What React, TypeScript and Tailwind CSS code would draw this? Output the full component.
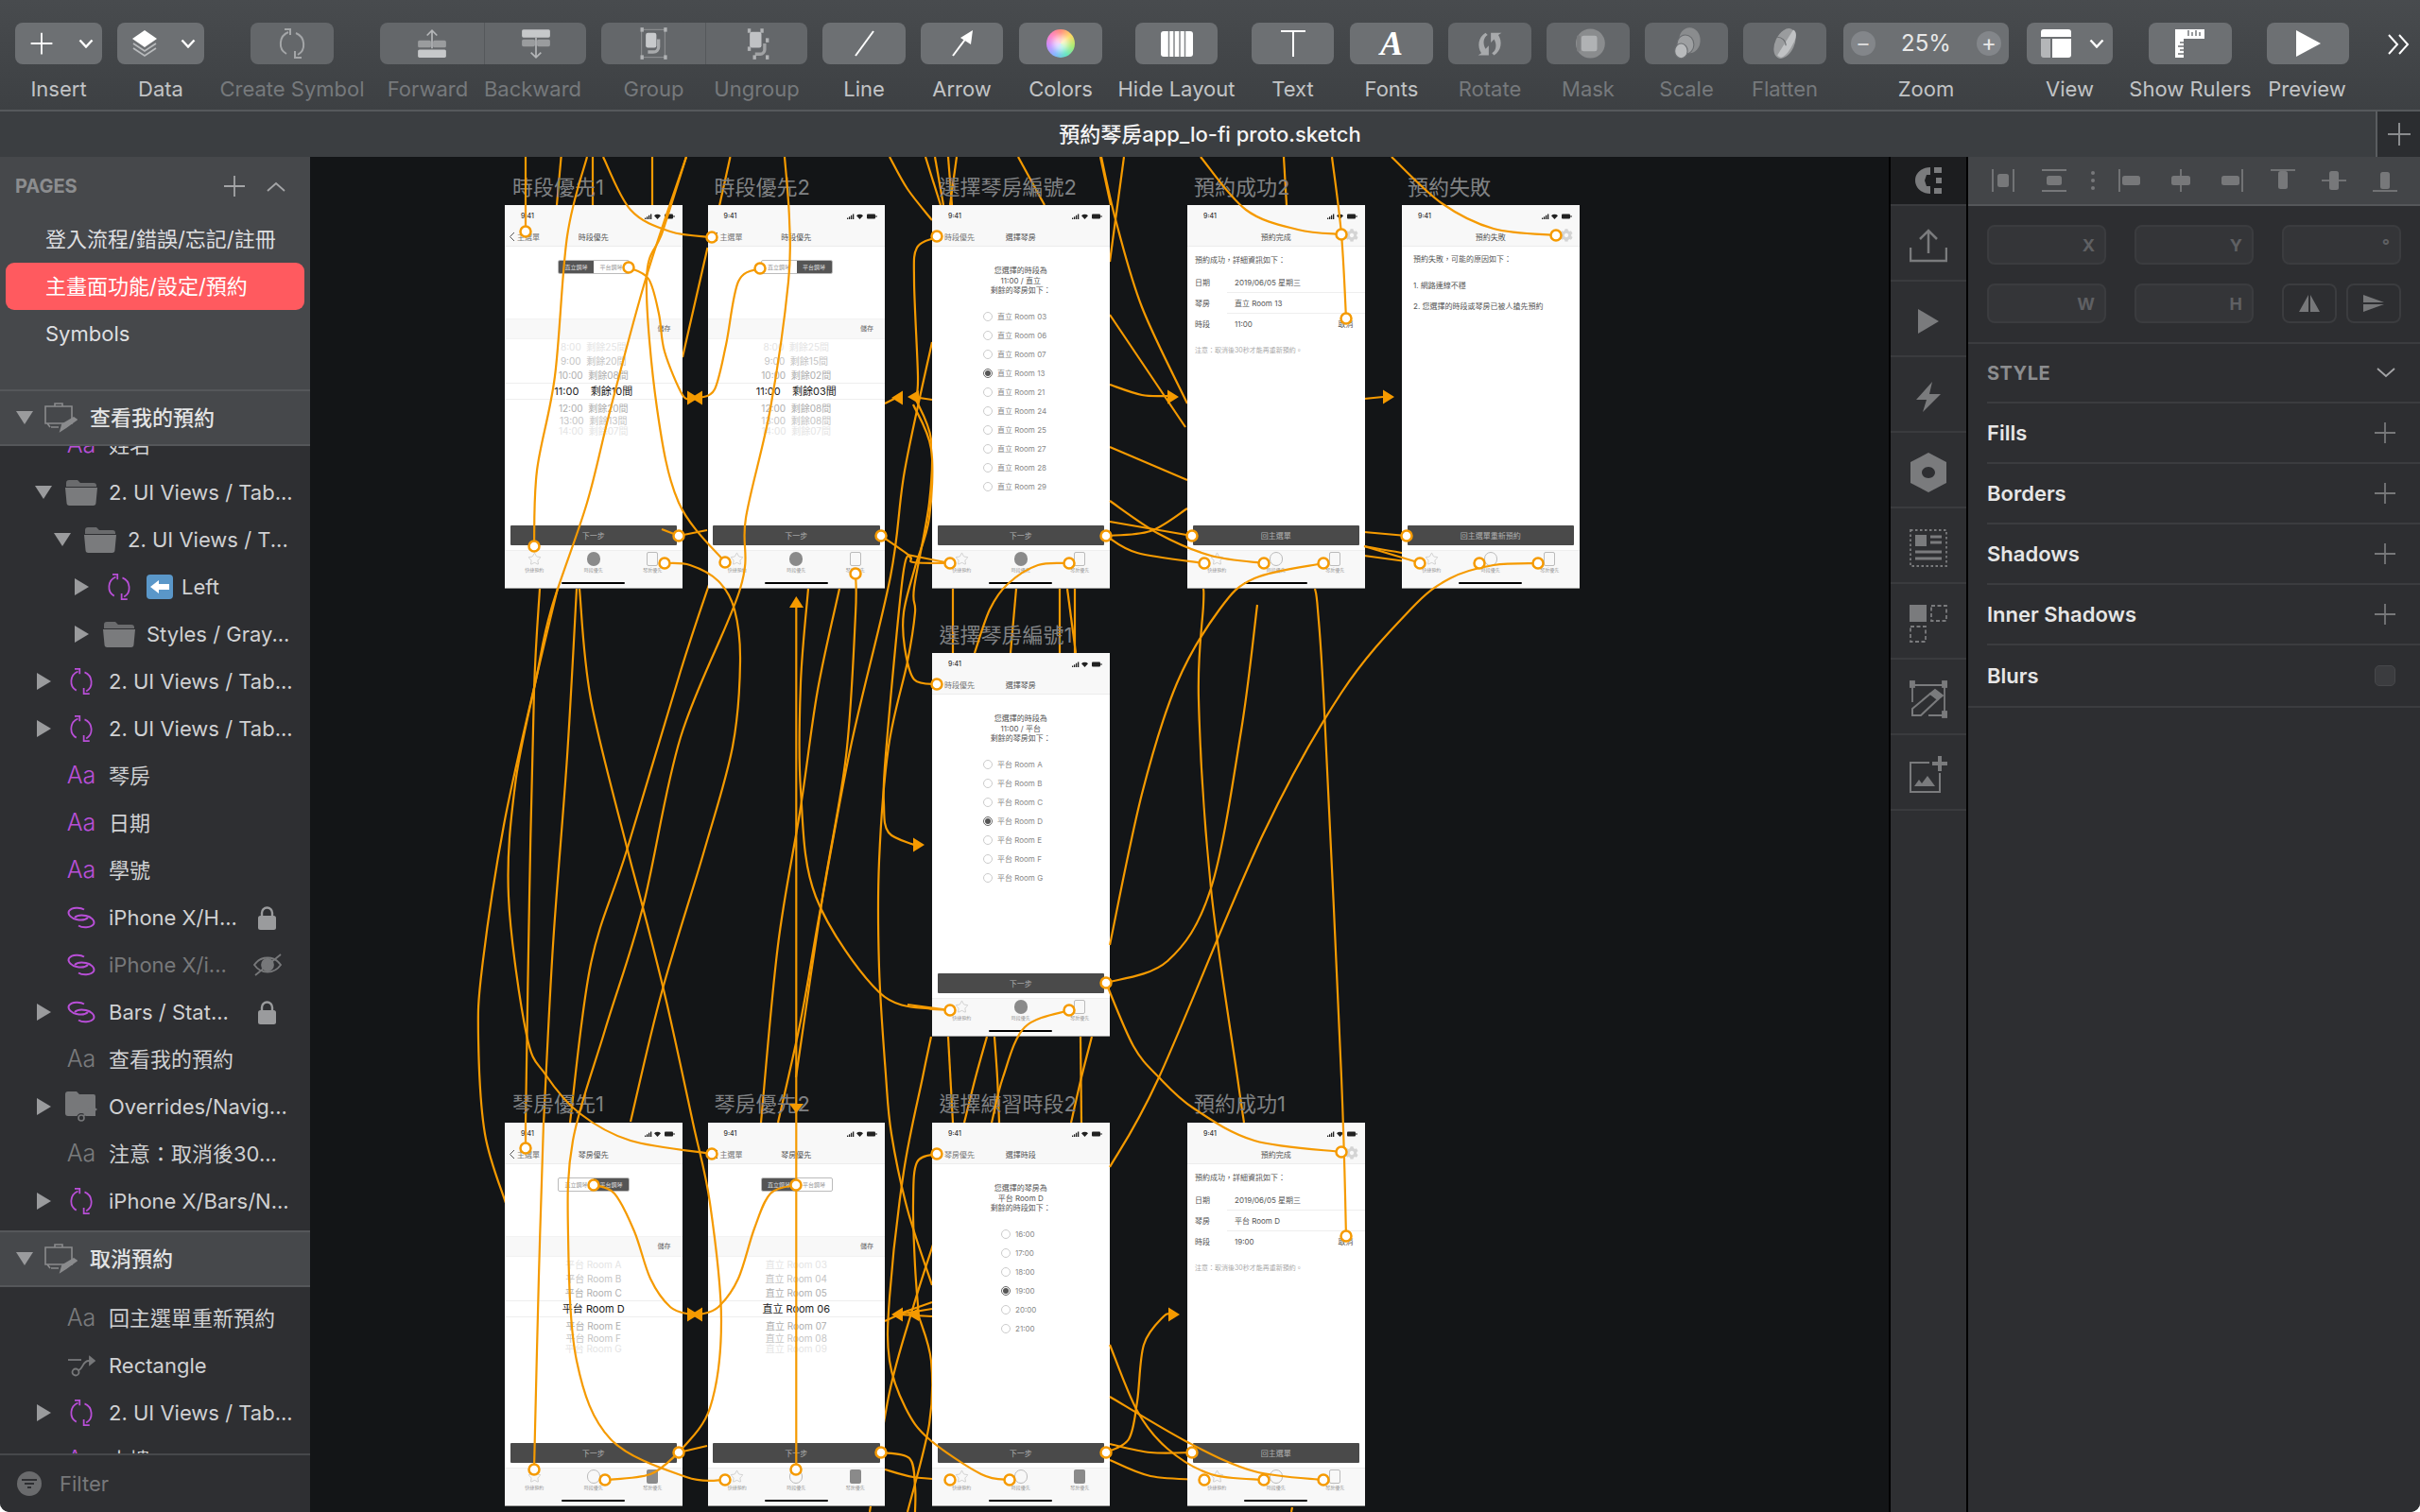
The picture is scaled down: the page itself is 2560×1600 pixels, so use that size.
import { ReactNode } from 'react';
import { Star } from 'lucide-react';
import { FaCog } from 'react-icons/fa';

type Pt = [number, number];

// catmull-rom through the traced points, good enough for the prototype links
function smooth(p: Pt[]) {
  let d = `M${p[0][0]} ${p[0][1]}`;
  for (let i = 0; i < p.length - 1; i++) {
    const a = p[Math.max(i - 1, 0)];
    const b = p[i];
    const c = p[i + 1];
    const e = p[Math.min(i + 2, p.length - 1)];
    d += ` C${b[0] + (c[0] - a[0]) / 6} ${b[1] + (c[1] - a[1]) / 6} ${c[0] - (e[0] - b[0]) / 6} ${c[1] - (e[1] - b[1]) / 6} ${c[0]} ${c[1]}`;
  }
  return d;
}

const behindLinks: Pt[][] = [
  [[593.6, 166], [589, 217]],
  [[627, 166], [627, 217]],
  [[690, 166], [690, 217]],
  [[772.5, 166], [761, 218]],
  [[748.5, 262], [722, 378]],
  [[979, 166], [995, 217]],
  [[989, 166], [998, 217]],
  [[1003, 166], [1007, 217]],
  [[1012, 166], [1005, 217]],
  [[1077, 166], [1105, 217]],
  [[941, 166], [960, 200], [986, 233]],
  [[1164, 166], [1175, 217]],
  [[1358, 166], [1361, 217]],
  [[1165, 166], [1180, 232], [1208, 325], [1256, 427]],
  [[1189, 166], [1174, 277]],
  [[1174, 333], [1254, 452]],
  [[1174, 407], [1208, 418], [1236, 419]],
  [[1174, 473], [1256, 508]],
  [[1174, 552], [1261, 567]],
  [[1170, 567], [1217, 562], [1256, 538]],
  [[1008, 623], [1008, 691]],
  [[1075, 623], [1069, 691]],
  [[1121, 623], [1121, 691]],
  [[1129, 623], [1138, 691]],
  [[1137, 623], [1137, 691]],
  [[571, 623], [565, 730], [560, 950], [556, 1190]],
  [[610, 623], [600, 800], [585, 1000], [575, 1190]],
  [[593, 610], [567, 719], [533, 873], [510, 1024], [506, 1099], [513, 1200], [535, 1273]],
  [[753, 610], [720, 710], [663, 900], [625, 1020], [603, 1188]],
  [[855, 623], [847, 723], [847, 836], [863, 949], [930, 1050], [986, 1068]],
  [[888, 623], [865, 730], [847, 854], [823, 1000], [805, 1188]],
  [[986, 362], [957, 498], [942, 610], [900, 790], [867, 967], [847, 1080], [823, 1188]],
  [[964, 590], [955, 610], [937, 798], [935, 851], [940, 881], [967, 894]],
  [[969, 423], [985, 465], [983, 532], [967, 622], [968, 648], [960, 700], [940, 790], [930, 911], [930, 1024], [937, 1137], [943, 1200], [960, 1280], [986, 1360]],
  [[1003, 1097], [1008, 1188]],
  [[1044, 1097], [1032, 1140], [1020, 1188]],
  [[1052, 1097], [1055, 1140], [1057, 1188]],
  [[1143, 1097], [1144, 1188]],
  [[1155, 1097], [1144, 1140], [1133, 1188]],
  [[1273, 623], [1273, 640], [1268, 740], [1281, 940], [1309, 1140], [1316, 1188]],
  [[1174, 1528], [1217, 1537], [1261, 1537]],
  [[1174, 1545], [1217, 1562], [1274, 1566]],
  [[1367, 1595], [1366, 1600]],
  [[987, 1317], [966, 1383], [941, 1473], [920, 1600]],
  [[986, 1378], [949, 1391]],
  [[986, 1385], [949, 1391]],
  [[986, 1393], [949, 1391]],
  [[936, 1398], [949, 1392]],
  [[936, 427], [948, 421]],
  [[986, 423], [966, 420]],
  [[972, 1393], [985, 1440], [983, 1507], [960, 1600]],
  [[932, 1537], [962, 1543], [968, 1573], [968, 1600]],
  [[936, 1555], [966, 1563], [1005, 1566]],
  [[1443, 422], [1463, 420]],
  [[1443, 563], [1488, 567]],
  [[1443, 578], [1502, 588], [1565, 596]],
  [[1443, 588], [1502, 596]],
];

const overLinks: Pt[][] = [
  [[556, 166], [556, 245]],
  [[621, 166], [600, 250], [587, 398], [568, 498], [565, 578]],
  [[726, 166], [701, 245], [684, 295], [695, 432], [718, 532], [767, 595]],
  [[726, 166], [684, 292], [646, 432], [621, 532], [583, 645], [567, 719], [545, 830], [538, 949], [557, 1095], [577, 1137], [613, 1178], [667, 1207], [753, 1221]],
  [[665, 283], [686, 295], [697, 332], [703, 372], [722, 418], [732, 421]],
  [[638, 166], [667, 222], [709, 245], [753, 251]],
  [[804, 284], [781, 298], [768, 365], [756, 412], [740, 421]],
  [[718, 567], [748, 561]],
  [[703, 596], [730, 598], [760, 615], [777, 645], [783, 700], [775, 790], [745, 900], [700, 1050], [667, 1187]],
  [[932, 567], [962, 588], [966, 595], [1005, 596]],
  [[830, 166], [835, 232], [834, 298], [815, 432], [789, 548], [783, 623], [720, 780], [680, 960], [640, 1090], [606, 1207], [601, 1307], [610, 1440], [646, 1523], [726, 1563], [767, 1566]],
  [[613, 623], [625, 740], [663, 896], [680, 960], [705, 1060], [733, 1188], [751, 1273], [763, 1397], [751, 1490], [718, 1537]],
  [[905, 607], [905, 650], [895, 800], [870, 950], [842, 1140]],
  [[842.3, 640], [842.3, 1555]],
  [[986, 1068], [1005, 1069]],
  [[991, 724], [967, 719], [957, 685], [956, 648], [968, 600], [983, 548], [985, 475], [966, 428]],
  [[991, 251], [970, 262], [967, 298], [971, 398], [969, 420]],
  [[985, 1097], [976, 1140], [956, 1240], [941, 1373], [941, 1440], [958, 1490], [983, 1523], [1038, 1560], [1068, 1566]],
  [[991, 1221], [970, 1230], [966, 1273], [968, 1340], [972, 1393]],
  [[1131, 596], [1098, 598], [1066, 618], [1047, 645], [1031, 691]],
  [[1005, 596], [960, 587]],
  [[1131, 1069], [1084, 1087], [1061, 1140], [1049, 1188]],
  [[1005, 1069], [960, 1063]],
  [[1170, 567], [1203, 585], [1274, 596]],
  [[1174, 530], [1226, 565], [1281, 588], [1337, 596]],
  [[1400, 596], [1327, 612], [1290, 645], [1245, 723], [1208, 840], [1174, 1000]],
  [[1330, 640], [1313, 773], [1281, 940], [1235, 1017], [1170, 1040]],
  [[1391, 623], [1394, 645], [1401, 753], [1419, 1140], [1424, 1308]],
  [[1627, 596], [1580, 598], [1534, 612], [1492, 645], [1419, 733], [1336, 883], [1226, 1140], [1174, 1235]],
  [[1170, 1040], [1199, 1107], [1226, 1140], [1263, 1173], [1327, 1207], [1419, 1219]],
  [[1270, 166], [1318, 222], [1373, 243], [1419, 248]],
  [[1409, 166], [1419, 248], [1424, 337]],
  [[1472, 166], [1525, 215], [1580, 242], [1646, 249]],
  [[1174, 1423], [1203, 1493], [1235, 1533], [1281, 1560], [1337, 1566]],
  [[1174, 1478], [1258, 1527], [1327, 1557], [1400, 1566]],
  [[1170, 1537], [1194, 1523], [1203, 1483], [1210, 1423], [1231, 1393], [1240, 1391]],
  [[556, 1188], [556, 1215]],
  [[575, 1188], [570, 1350], [565, 1555]],
  [[628, 1254], [650, 1263], [671, 1303], [688, 1353], [709, 1383], [730, 1391]],
  [[842, 1254], [815, 1263], [798, 1300], [781, 1353], [760, 1383], [741, 1391]],
  [[640, 1566], [688, 1560], [718, 1537]],
  [[718, 1537], [748, 1530]],
  [[1503, 596], [1443, 578]],
  [[718, 567], [700, 560]],
];

const hotspots: Pt[] = [
  [556, 245], [665, 283], [718, 567], [565, 578], [703, 596],
  [753, 251], [804, 284], [932, 567], [767, 595], [905, 607],
  [991, 250], [1170, 567], [1005, 596], [1131, 596],
  [1419, 248], [1424, 337], [1261, 567], [1274, 596], [1337, 596], [1400, 596],
  [1646, 249], [1488, 567], [1502, 596], [1565, 596], [1627, 596],
  [991, 724], [1170, 1040], [1005, 1069], [1131, 1069],
  [556, 1215], [628, 1254], [718, 1537], [565, 1555], [640, 1566],
  [753, 1221], [842, 1254], [932, 1537], [842, 1555], [767, 1566],
  [991, 1221], [1170, 1537], [1005, 1566], [1068, 1566],
  [1419, 1219], [1424, 1308], [1261, 1537], [1274, 1566], [1337, 1566], [1400, 1566],
];

const arrows: string[] = [
  '727,413.5 739,421 727,428.5',
  '743,413.5 731,421 743,428.5',
  '955,413.5 943,421 955,428.5',
  '972,413 960,420 972,427',
  '835,643 842.3,631 850,643',
  '1235,412.5 1247,420 1235,427.5',
  '1463,412.5 1475,420 1463,427.5',
  '966,886.5 978,894 966,901.5',
  '727,1383.5 739,1391 727,1398.5',
  '743,1383.5 731,1391 743,1398.5',
  '955,1383.5 943,1391 955,1398.5',
  '972,1384 960,1391 972,1398',
  '835,1168 842.3,1178 850,1168',
  '1236,1383.5 1248,1391 1236,1398.5',
];

function Links({ items }: { items: Pt[][] }) {
  return (
    <svg className="absolute inset-0 h-[1434px] w-[1672px]" viewBox="328 166 1672 1434" fill="none" stroke="#f59a00" strokeWidth="2.2">
      {items.map((p, i) => (
        <path key={i} d={smooth(p)} />
      ))}
    </svg>
  );
}

/* ---------- toolbar icons ---------- */

function Svg({ size = 32, children, className = '' }: { size?: number; children: ReactNode; className?: string }) {
  return (
    <svg width={size} height={size} viewBox="0 0 32 32" fill="none" className={className}>
      {children}
    </svg>
  );
}

function Chevron() {
  return (
    <svg width="16" height="10" viewBox="0 0 16 10" fill="none" stroke="#fff" strokeWidth="2.4">
      <path d="M1.5 1.5 8 8.5l6.5-7" />
    </svg>
  );
}

function SymbolIcon({ size = 32, color = '#a4a6a8', width = 2 }: { size?: number; color?: string; width?: number }) {
  return (
    <svg width={size} height={size} viewBox="0 0 32 32" fill="none" stroke={color} strokeWidth={width}>
      <path d="M12 4C2 8 1 22 10 27" />
      <path d="M8 1h6v6" />
      <path d="M20 5c10 4 11 18 2 23" />
      <path d="M26 31h-7v-7" />
    </svg>
  );
}

function LinkIcon() {
  return (
    <svg width="30" height="24" viewBox="0 0 30 24" fill="none" stroke="#b94fd8" strokeWidth="2">
      <path d="M18 3.500C14 1 5 1 2 5c-2 4 3 8 8 9 5 1 10 0 12-2" />
      <path d="M12 20.500c4 2.500 13 2.500 16-1.500 2-4-3-8-8-9-5-1-10 0-12 2" />
    </svg>
  );
}

const toolIcons: Record<string, ReactNode> = {
  forward: (
    <Svg size={34}>
      <path d="M16 21V3M11 8l5-5 5 5" stroke="#b4b6b8" strokeWidth="1.6" />
      <rect x="2" y="13" width="13" height="7" rx="1.5" fill="#9a9c9e" />
      <rect x="17" y="13" width="13" height="7" rx="1.500" fill="#9a9c9e" />
      <rect x="2" y="22" width="28" height="8" rx="1.500" fill="#c6c8ca" />
    </Svg>
  ),
  backward: (
    <Svg size={34}>
      <rect x="2" y="2" width="28" height="8" rx="1.500" fill="#c6c8ca" />
      <rect x="2" y="12" width="13" height="7" rx="1.500" fill="#9a9c9e" />
      <rect x="17" y="12" width="13" height="7" rx="1.500" fill="#9a9c9e" />
      <path d="M16 10v20M11 25l5 5 5-5" stroke="#b4b6b8" strokeWidth="1.600" />
    </Svg>
  ),
  group: (
    <Svg size={36}>
      <rect x="5" y="3" width="22" height="26" stroke="#8c8e90" strokeWidth="1" />
      <rect x="4" y="1" width="3" height="4" fill="#b0b2b4" />
      <rect x="26" y="1" width="3" height="4" fill="#b0b2b4" />
      <rect x="4" y="27" width="3" height="4" fill="#b0b2b4" />
      <rect x="26" y="27" width="3" height="4" fill="#b0b2b4" />
      <rect x="9" y="6" width="10" height="14" rx="2" fill="#c8cacc" />
      <path d="M21 12v7c0 3-2 5-5 5h-5" stroke="#a8aaac" strokeWidth="3" />
    </Svg>
  ),
  ungroup: (
    <Svg size={36}>
      <rect x="9" y="5" width="11" height="15" rx="2" fill="#c0c2c4" />
      <path d="M23 16v6c0 2-2 4-4 4h-5" stroke="#a0a2a4" strokeWidth="3" />
      <rect x="7" y="2" width="3" height="4" fill="#b0b2b4" />
      <rect x="19" y="2" width="3" height="4" fill="#b0b2b4" />
      <rect x="7" y="19" width="3" height="4" fill="#b0b2b4" />
      <rect x="24" y="11" width="3" height="4" fill="#b0b2b4" />
      <rect x="24" y="27" width="3" height="4" fill="#b0b2b4" />
      <rect x="12" y="27" width="3" height="4" fill="#b0b2b4" />
    </Svg>
  ),
  line: <Svg><path d="M26 3 7 29" stroke="#fff" strokeWidth="2" /></Svg>,
  arrow: (
    <Svg>
      <path d="M6 29 21 9" stroke="#fff" strokeWidth="2" />
      <path d="M27 2l-2 15-11-7z" fill="#fff" />
    </Svg>
  ),
  layout: (
    <svg width="34" height="27" viewBox="0 0 34 27">
      <rect width="34" height="27" rx="3" fill="#fff" />
      <path d="M8.500 0v27M14 0v27M20 0v27M25.500 0v27" stroke="#85888a" strokeWidth="1.500" />
    </svg>
  ),
  text: <Svg><path d="M3 3h26M16 3v27" stroke="#fff" strokeWidth="2" /></Svg>,
  rotate: (
    <Svg size={36}>
      <path d="M12 6c-7 4-8 13-4 19l-3 2h10v-9l-3 3c-3-5-2-11 2-13z" fill="#a8aaac" />
      <path d="M20 27c7-4 8-13 4-19l3-2H17v9l3-3c3 5 2 11-2 13z" fill="#a8aaac" />
    </Svg>
  ),
  mask: (
    <Svg size={38}>
      <circle cx="18" cy="16" r="13" fill="#8a8c8e" />
      <rect x="10" y="9" width="14" height="14" rx="2" fill="#b0b2b4" />
      <rect x="6" y="9" width="3" height="14" fill="#7c7e80" />
    </Svg>
  ),
  scale: (
    <Svg size={36}>
      <ellipse cx="19" cy="13" rx="10" ry="12" fill="#8a8c8e" />
      <ellipse cx="15" cy="17" rx="8" ry="9" fill="#9d9fa1" stroke="#6a6d70" />
      <ellipse cx="11" cy="23" rx="6" ry="7" fill="#b8babc" stroke="#6a6d70" />
    </Svg>
  ),
  flatten: (
    <Svg size={36}>
      <ellipse cx="16" cy="16" rx="9" ry="15" transform="rotate(25 16 16)" fill="#9a9c9e" />
      <path d="M24 3c4 2 3 8 0 13-3 6-7 12-11 13-2 0-3-1-4-2z" fill="#c0c2c4" />
      <path d="M9 10c4 0 8 3 8 8" stroke="#6a6d70" />
    </Svg>
  ),
  view: (
    <svg width="32" height="30" viewBox="0 0 32 30">
      <path d="M0 10h10v20H3a3 3 0 0 1-3-3z" fill="#b4b6b8" />
      <path d="M12 10h20v17a3 3 0 0 1-3 3H12z" fill="#fff" />
      <path d="M3 0h26a3 3 0 0 1 3 3v5H0V3a3 3 0 0 1 3-3z" fill="#fff" />
    </svg>
  ),
  rulers: (
    <svg width="32" height="30" viewBox="0 0 32 30">
      <path d="M0 0h31v10H9v20H0z" fill="#fff" />
      <path d="M14 1v6M18 3v4M22 1v6M26 3v4M5 14h4M3 18h6M5 22h4M3 26h6" stroke="#6c6f72" strokeWidth="1.400" />
    </svg>
  ),
  play: <svg width="28" height="28" viewBox="0 0 28 28"><path d="M1 0l26 14L1 28z" fill="#fff" /></svg>,
};

function Tool({ className, label, dim, bg = 'bg-[#6d7073] rounded-[8px]', labelClass = '', children }: { className: string; label: string; dim?: boolean; bg?: string; labelClass?: string; children: ReactNode }) {
  return (
    <div className={`flex flex-col items-center ${className}`}>
      <div className={`flex h-[44px] w-full items-center justify-center ${bg}`}>{children}</div>
      <span className={`mt-[12px] whitespace-nowrap text-[22px] leading-[28px] ${dim ? 'text-[#76797c]' : 'text-[#c2c4c6]'} ${labelClass}`}>{label}</span>
    </div>
  );
}

function Toolbar() {
  return (
    <div className="flex h-[118px] items-start border-b-2 border-[#56595c] bg-gradient-to-b from-[#484b4e] to-[#3d4043] pt-[24px]">
      <Tool className="ml-[16px] w-[92px]" label="Insert">
        <span className="flex w-full items-center justify-between pl-[15px] pr-[9px]">
          <Svg size={26}><path d="M16 2v28M2 16h28" stroke="#fff" strokeWidth="2.200" /></Svg>
          <Chevron />
        </span>
      </Tool>
      <Tool className="ml-[16px] w-[92px]" label="Data">
        <span className="flex w-full items-center justify-between pl-[14px] pr-[9px]">
          <svg width="30" height="30" viewBox="0 0 30 30" fill="none">
            <path d="M15 1 28 10 15 19 2 10z" fill="#fff" />
            <path d="M3 15l12 8 12-8M3 20l12 8 12-8" stroke="#b8babc" strokeWidth="1.800" />
          </svg>
          <Chevron />
        </span>
      </Tool>
      <Tool className="ml-[49px] w-[88px]" label="Create Symbol" dim bg="bg-[#64676a] rounded-[8px]">
        <SymbolIcon />
      </Tool>
      <Tool className="ml-[49px] w-[111px]" label="Forward" dim labelClass="-translate-x-[5px]" bg="bg-[#64676a] rounded-l-[8px] border-r border-[#55585b]">{toolIcons.forward}</Tool>
      <Tool className="w-[107px]" label="Backward" dim labelClass="-translate-x-[3px]" bg="bg-[#64676a] rounded-r-[8px]">{toolIcons.backward}</Tool>
      <Tool className="ml-[16px] w-[111px]" label="Group" dim bg="bg-[#64676a] rounded-l-[8px] border-r border-[#55585b]">{toolIcons.group}</Tool>
      <Tool className="w-[107px]" label="Ungroup" dim bg="bg-[#64676a] rounded-r-[8px]">{toolIcons.ungroup}</Tool>
      <Tool className="ml-[16px] w-[88px]" label="Line">{toolIcons.line}</Tool>
      <Tool className="ml-[16px] w-[87px]" label="Arrow">{toolIcons.arrow}</Tool>
      <Tool className="ml-[17px] w-[88px]" label="Colors">
        <span className="relative h-[30px] w-[30px] rounded-full bg-[conic-gradient(#ff8a7a,#ffd860,#a6ec6e,#5fe3c0,#7fb5ff,#c58bff,#ff7fc4,#ff8a7a)]">
          <span className="absolute inset-[6px] rounded-full bg-[#ffffffb0] blur-[3px]" />
        </span>
      </Tool>
      <Tool className="ml-[35px] w-[87px]" label="Hide Layout">{toolIcons.layout}</Tool>
      <Tool className="ml-[36px] w-[87px]" label="Text">{toolIcons.text}</Tool>
      <Tool className="ml-[17px] w-[88px]" label="Fonts">
        <span className="[font-family:'Liberation_Serif',serif] text-[36px] font-bold italic leading-none text-white">A</span>
      </Tool>
      <Tool className="ml-[16px] w-[88px]" label="Rotate" dim bg="bg-[#64676a] rounded-[8px]">{toolIcons.rotate}</Tool>
      <Tool className="ml-[16px] w-[88px]" label="Mask" dim bg="bg-[#64676a] rounded-[8px]">{toolIcons.mask}</Tool>
      <Tool className="ml-[16px] w-[88px]" label="Scale" dim bg="bg-[#64676a] rounded-[8px]">{toolIcons.scale}</Tool>
      <Tool className="ml-[16px] w-[88px]" label="Flatten" dim bg="bg-[#64676a] rounded-[8px]">{toolIcons.flatten}</Tool>
      <Tool className="ml-[18px] w-[175px]" label="Zoom">
        <span className="flex w-full items-center justify-between px-[8px]">
          <span className="flex h-[26px] w-[26px] items-center justify-center rounded-full bg-[#83868a] text-[24px] leading-none text-[#d8d8d8]">−</span>
          <span className="text-[24px] text-[#e8e8e8]">25%</span>
          <span className="flex h-[26px] w-[26px] items-center justify-center rounded-full bg-[#83868a] text-[24px] leading-none text-[#e8e8e8]">+</span>
        </span>
      </Tool>
      <Tool className="ml-[19px] w-[91px]" label="View">
        <span className="flex w-full items-center justify-between pl-[15px] pr-[9px]">
          {toolIcons.view}
          <Chevron />
        </span>
      </Tool>
      <Tool className="ml-[38px] w-[88px]" label="Show Rulers">{toolIcons.rulers}</Tool>
      <Tool className="ml-[37px] w-[87px]" label="Preview" labelClass="-translate-x-[1px]">{toolIcons.play}</Tool>
      <svg className="ml-[40px] mt-[11px]" width="24" height="24" viewBox="0 0 24 24" fill="none" stroke="#fff" strokeWidth="2">
        <path d="M2 2l9 10-9 10M13 2l9 10-9 10" />
      </svg>
    </div>
  );
}

function TitleBar() {
  return (
    <div className="flex h-[48px] bg-[#3b3e41]">
      <div className="flex flex-1 items-center justify-center pl-[47px] text-[22px] font-medium text-[#f4f4f4]">預約琴房app_lo-fi proto.sketch</div>
      <div className="flex w-[47px] items-center justify-center border-l-2 border-[#5a5d60] bg-[#2b2d30]">
        <svg width="24" height="24" viewBox="0 0 24 24" stroke="#8a8c8e" strokeWidth="2"><path d="M12 0v24M0 12h24" /></svg>
      </div>
    </div>
  );
}

/* ---------- layer list ---------- */

function Disclosure({ open }: { open: boolean }) {
  return open ? (
    <svg width="18" height="14" viewBox="0 0 18 14"><path d="M0 0h18L9 14z" fill="#9a9b9d" /></svg>
  ) : (
    <svg width="15" height="18" viewBox="0 0 15 18"><path d="M0 0l15 9-15 9z" fill="#9a9b9d" /></svg>
  );
}

function FolderIcon({ w = 34 }: { w?: number }) {
  return (
    <svg width={w} height="28" viewBox="0 0 34 28">
      <path d="M1 4a3 3 0 0 1 3-3h9l3 3h14a3 3 0 0 1 3 3v1H1z" fill="#6a6b6d" />
      <path d="M0 9h34l-1.500 16a3 3 0 0 1-3 3H4.500a3 3 0 0 1-3-3z" fill="#7a7b7d" />
    </svg>
  );
}

function HotspotFolder() {
  return (
    <svg width="34" height="32" viewBox="0 0 34 32">
      <path d="M0 3a3 3 0 0 1 3-3h9l3 3h15a2 2 0 0 1 2 2v21H3a3 3 0 0 1-3-3z" fill="#77787a" />
      <circle cx="17" cy="28" r="3" fill="none" stroke="#2e2f32" strokeWidth="4" />
      <circle cx="17" cy="28" r="3" fill="none" stroke="#77787a" strokeWidth="1.600" />
      <path d="M19 26c3-1 3-7 8-7h3" stroke="#77787a" strokeWidth="1.600" fill="none" />
      <path d="M29 15l5 4-5 4z" fill="#77787a" />
    </svg>
  );
}

function HotspotIcon() {
  return (
    <svg width="30" height="24" viewBox="0 0 30 24" fill="none" stroke="#77787a" strokeWidth="1.800">
      <path d="M1 6h14" />
      <circle cx="9" cy="19" r="3.500" />
      <path d="M12 17c5-1 4-10 11-10h2" />
      <path d="M24 3l5 4-5 4z" fill="#77787a" />
    </svg>
  );
}

function Lock() {
  return (
    <svg width="19" height="26" viewBox="0 0 19 26" className="ml-auto mr-[36px]">
      <path d="M4 12V8a5.500 5.500 0 0 1 11 0v4" fill="none" stroke="#9a9b9d" strokeWidth="2.400" />
      <rect y="11" width="19" height="15" rx="2.500" fill="#9a9b9d" />
    </svg>
  );
}

function EyeOff() {
  return (
    <svg width="30" height="24" viewBox="0 0 30 24" fill="none" stroke="#77787a" strokeWidth="1.800" className="ml-auto mr-[30px]">
      <path d="M1 12c7-10 21-10 28 0-7 10-21 10-28 0z" />
      <circle cx="15" cy="12" r="6" fill="#77787a" />
      <path d="M2 23 29 1" />
    </svg>
  );
}

function LeftEmoji() {
  return (
    <svg width="28" height="26" viewBox="0 0 28 26" className="mr-[9px]">
      <rect width="28" height="26" rx="4" fill="#5a97c9" />
      <path d="M4 13l9-7v4h11v6H13v4z" fill="#fff" />
    </svg>
  );
}

type Row = {
  depth?: 1 | 2 | 3;
  open?: boolean;
  icon: ReactNode;
  text: string;
  muted?: boolean;
  lead?: ReactNode;
  end?: ReactNode;
};

const aaPurple = <span className="text-[25px] font-light text-[#b94fd8]">Aa</span>;
const aaGray = <span className="text-[25px] font-light text-[#7a7b7d]">Aa</span>;
const symbol = <SymbolIcon size={28} color="#b94fd8" />;
const link = <LinkIcon />;

const layerRows: Row[] = [
  { icon: aaPurple, text: '姓名' },
  { open: true, icon: <FolderIcon />, text: '2. UI Views / Tab...' },
  { depth: 2, open: true, icon: <FolderIcon />, text: '2. UI Views / T...' },
  { depth: 3, open: false, icon: symbol, lead: <LeftEmoji />, text: 'Left' },
  { depth: 3, open: false, icon: <FolderIcon />, text: 'Styles / Gray...' },
  { open: false, icon: symbol, text: '2. UI Views / Tab...' },
  { open: false, icon: symbol, text: '2. UI Views / Tab...' },
  { icon: aaPurple, text: '琴房' },
  { icon: aaPurple, text: '日期' },
  { icon: aaPurple, text: '學號' },
  { icon: link, text: 'iPhone X/H...', end: <Lock /> },
  { icon: link, text: 'iPhone X/i...', muted: true, end: <EyeOff /> },
  { open: false, icon: link, text: 'Bars / Stat...', end: <Lock /> },
  { icon: aaGray, text: '查看我的預約' },
  { open: false, icon: <HotspotFolder />, text: 'Overrides/Navig...' },
  { icon: aaGray, text: '注意：取消後30...' },
  { open: false, icon: symbol, text: 'iPhone X/Bars/N...' },
];

const cancelRows: Row[] = [
  { icon: aaGray, text: '回主選單重新預約' },
  { icon: <HotspotIcon />, text: 'Rectangle' },
  { open: false, icon: symbol, text: '2. UI Views / Tab...' },
  { icon: aaPurple, text: '大樓' },
];

function LayerRow({ depth = 1, open, icon, text, muted, lead, end }: Row) {
  const pad = depth === 1 ? 'pl-[37px]' : depth === 2 ? 'pl-[57px]' : 'pl-[77px]';
  return (
    <div className={`flex h-[50px] shrink-0 items-center ${pad}`}>
      <span className="flex w-[18px] justify-center">{open !== undefined && <Disclosure open={open} />}</span>
      <span className="ml-[13px] flex w-[36px] justify-center">{icon}</span>
      <span className={`ml-[11px] flex items-center whitespace-nowrap text-[22px] ${muted ? 'text-[#77787a]' : 'text-[#d0d1d3]'}`}>
        {lead}
        {text}
      </span>
      {end}
    </div>
  );
}

function GroupHeader({ title }: { title: string }) {
  return (
    <div className="relative z-10 flex h-[60px] shrink-0 items-center border-y-2 border-[#55575a] bg-[#46484b] pl-[17px]">
      <Disclosure open />
      <svg className="ml-[11px]" width="36" height="32" viewBox="0 0 36 32" fill="none" stroke="#8a8b8d" strokeWidth="1.600">
        <path d="M2 4h28v18H2zM12 4V1h8v3M8 26h8M4 22l3 4" />
        <path d="M35 18 24 26l-6 4 2-7 12-7z" fill="#8a8b8d" />
      </svg>
      <span className="ml-[13px] text-[22px] font-medium text-[#e2e3e4]">{title}</span>
    </div>
  );
}

function Sidebar() {
  return (
    <aside className="flex w-[328px] shrink-0 flex-col overflow-hidden bg-[#2e2f32]">
      <div className="h-[246px] shrink-0 bg-[#46484b]">
        <div className="flex h-[62px] items-center pl-[16px]">
          <span className="text-[20px] font-bold text-[#8c8d8f]">PAGES</span>
          <svg className="ml-[155px]" width="22" height="22" viewBox="0 0 22 22" stroke="#a4a5a7" strokeWidth="1.800"><path d="M11 0v22M0 11h22" /></svg>
          <svg className="ml-[23px]" width="20" height="11" viewBox="0 0 20 11" fill="none" stroke="#a4a5a7" strokeWidth="1.800"><path d="M1 10l9-8 9 8" /></svg>
        </div>
        <div className="flex h-[50px] items-center pl-[48px] text-[22px] text-[#dedfe0]">登入流程/錯誤/忘記/註冊</div>
        <div className="mx-[6px] flex h-[50px] items-center rounded-[9px] bg-[#ff5a5f] pl-[42px] text-[22px] text-white">主畫面功能/設定/預約</div>
        <div className="flex h-[50px] items-center pl-[48px] text-[22px] text-[#dedfe0]">Symbols</div>
      </div>
      <GroupHeader title="查看我的預約" />
      <div className="flex h-[830px] shrink-0 flex-col overflow-hidden">
        <div className="-mt-[26px]">
          {layerRows.map((r, i) => (
            <LayerRow key={i} {...r} />
          ))}
        </div>
      </div>
      <GroupHeader title="取消預約" />
      <div className="h-[176px] shrink-0 overflow-hidden pt-[8px]">
        {cancelRows.map((r, i) => (
          <LayerRow key={i} {...r} />
        ))}
      </div>
      <div className="flex flex-1 items-center border-t-2 border-[#46484b] pl-[18px]">
        <svg width="26" height="26" viewBox="0 0 26 26" stroke="#2e2f32" strokeWidth="2">
          <circle cx="13" cy="13" r="13" fill="#6a6b6d" stroke="none" />
          <path d="M5 9h16M8 13h10M11 17h4" />
        </svg>
        <span className="ml-[19px] text-[22px] text-[#77787a]">Filter</span>
      </div>
    </aside>
  );
}

/* ---------- artboards ---------- */

function StatusBar() {
  return (
    <div className="flex h-[24px] items-center justify-between pl-[17px] pr-[8px]">
      <span className="text-[7px] font-medium text-[#333]">9:41</span>
      <svg width="32" height="6" viewBox="0 0 32 6" fill="#222">
        <path d="M0 4.500h1.300V6H0zM2 3.200h1.300V6H2zM4 1.800h1.300V6H4zM6 .5h1.300V6H6z" />
        <path d="M10 2.200a5 5 0 0 1 7 0l-3.500 3.800z" />
        <rect x="21" y=".5" width="9" height="5" rx="1" />
        <rect x="30.500" y="2" width="1" height="2" />
      </svg>
    </div>
  );
}

function Phone({ className, back, title, gear, footer, tab, children }: { className: string; back?: string; title: string; gear?: boolean; footer: string; tab?: 'circle' | 'square'; children: ReactNode }) {
  return (
    <div className={`absolute flex h-[406px] w-[187.5px] flex-col overflow-hidden border-b border-[#999] bg-white [font-family:Inter,'Noto_Sans_CJK_TC',sans-serif] ${className}`}>
      <div className="h-[44px] shrink-0 border-b border-[#ececec] bg-[#f8f8f8]">
        <StatusBar />
        <div className="relative flex h-[19px] items-center justify-center text-[8px] text-[#555]">
          {back && (
            <span className="absolute left-[4px] flex items-center text-[#777]">
              <svg width="7" height="11" viewBox="0 0 7 11" fill="none" stroke="#555" strokeWidth="1"><path d="M6 1 1.500 5.500 6 10" /></svg>
              <span className="ml-[2px]">{back}</span>
            </span>
          )}
          {title}
          {gear && <FaCog className="absolute right-[7px] top-[1px] text-[14px] text-[#d4d4d4]" />}
        </div>
      </div>
      <div className="flex-1 overflow-hidden">{children}</div>
      <div className="mx-[5.5px] flex h-[21px] shrink-0 items-center justify-center rounded-[1px] bg-[#4a4a4a] text-[8px] text-[#b0b0b0]">{footer}</div>
      <div className="mt-[5px] flex h-[40px] shrink-0 flex-col border-t border-[#eeeeee] bg-[#f8f8f8]">
        <div className="grid grid-cols-3 pt-[1px]">
          <div className="flex flex-col items-center">
            <Star size={15} strokeWidth={0.8} className="text-[#aaa]" />
            <span className="mt-[2px] text-[5px] leading-none text-[#999]">快捷預約</span>
          </div>
          <div className="flex flex-col items-center">
            <span className={`h-[15px] w-[14px] rounded-full ${tab === 'circle' ? 'bg-[#8a8a8a]' : 'border border-[#bbb]'}`} />
            <span className="mt-[2px] text-[5px] leading-none text-[#999]">時段優先</span>
          </div>
          <div className="flex flex-col items-center">
            <span className={`h-[15px] w-[12px] rounded-[2px] ${tab === 'square' ? 'bg-[#8a8a8a]' : 'border border-[#bbb]'}`} />
            <span className="mt-[2px] text-[5px] leading-none text-[#999]">琴房優先</span>
          </div>
        </div>
        <div className="mx-auto mb-[4px] mt-auto h-[2px] w-[67px] rounded-full bg-black" />
      </div>
    </div>
  );
}

const pickerRowStyles = [
  'h-[16px] text-[#e4e4e4]',
  'h-[15px] text-[#c4c4c4]',
  'h-[15px] text-[#adadad]',
  'h-[18px] border-y border-[#eeeeee] text-[11px] text-[#222]',
  'h-[18px] text-[#adadad]',
  'h-[9px] text-[#c4c4c4]',
  'h-[13px] text-[#e4e4e4]',
];

function PickerBody({ active, rows }: { active: 0 | 1; rows: string[] }) {
  return (
    <div className="flex h-full flex-col">
      <div className="mt-[14px] ml-[56px] flex h-[15px] w-[76px] overflow-hidden rounded-[2px] border border-[#bbb] text-[6px]">
        <span className={`flex w-1/2 items-center justify-center ${active === 0 ? 'bg-[#555] text-[#ddd]' : 'text-[#999]'}`}>直立鋼琴</span>
        <span className={`flex w-1/2 items-center justify-center ${active === 1 ? 'bg-[#555] text-[#ddd]' : 'text-[#999]'}`}>平台鋼琴</span>
      </div>
      <div className="mt-[47px] flex h-[22px] shrink-0 items-center justify-end border-y border-[#f2f2f2] bg-[#f8f8f8] pr-[12px] text-[7px] text-[#666]">儲存</div>
      <div className="flex h-[104px] shrink-0 flex-col overflow-hidden text-[10px]">
        {rows.map((r, i) => (
          <div key={i} className={`flex shrink-0 items-center justify-center whitespace-pre ${pickerRowStyles[i]}`}>
            {r}
          </div>
        ))}
      </div>
    </div>
  );
}

function RadioBody({ intro, items, selected, pad }: { intro: string[]; items: string[]; selected: number; pad: string }) {
  return (
    <div className="pt-[20px]">
      {intro.map((l) => (
        <p key={l} className="text-center text-[8px] leading-[10.500px] text-[#555]">
          {l}
        </p>
      ))}
      <div className={`mt-[12px] ${pad}`}>
        {items.map((t, i) => (
          <div key={t} className="flex h-[20px] items-center text-[8px] text-[#888]">
            <span className={`mr-[5px] flex h-[10px] w-[10px] items-center justify-center rounded-full border ${i === selected ? 'border-[#666]' : 'border-[#ccc]'}`}>
              {i === selected && <span className="h-[6px] w-[6px] rounded-full bg-[#555]" />}
            </span>
            {t}
          </div>
        ))}
      </div>
    </div>
  );
}

function SuccessBody({ room, time }: { room: string; time: string }) {
  const rows = [
    ['日期', '2019/06/05 星期三'],
    ['琴房', room],
    ['時段', time],
  ];
  return (
    <div className="text-[8px] text-[#555]">
      <p className="mt-[8px] flex h-[12px] items-center pl-[8px]">預約成功，詳細資訊如下：</p>
      <div className="mt-[7px]">
        {rows.map(([a, b], i) => (
          <div key={a} className="flex h-[22px] items-center pl-[8px]">
            <span className="w-[34px] shrink-0">{a}</span>
            <span className={`flex h-full flex-1 items-center justify-between pl-[8px] pr-[12px] ${i < 2 ? 'border-b border-[#eeeeee]' : ''}`}>
              {b}
              {i === 2 && <span>取消</span>}
            </span>
          </div>
        ))}
      </div>
      <p className="mt-[12px] pl-[8px] text-[7px] text-[#aaa]">注意：取消後30秒才能再重新預約。</p>
    </div>
  );
}

function FailBody() {
  return (
    <div className="pl-[12px] pt-[7px] text-[8px] text-[#555]">
      <p className="h-[12px]">預約失敗，可能的原因如下：</p>
      <p className="mt-[16px] h-[12px]">1. 網路連線不穩</p>
      <p className="mt-[10px] h-[12px]">2. 您選擇的時段或琴房已被人搶先預約</p>
    </div>
  );
}

const roomsA = ['直立 Room 03', '直立 Room 06', '直立 Room 07', '直立 Room 13', '直立 Room 21', '直立 Room 24', '直立 Room 25', '直立 Room 27', '直立 Room 28', '直立 Room 29'];
const roomsB = ['平台 Room A', '平台 Room B', '平台 Room C', '平台 Room D', '平台 Room E', '平台 Room F', '平台 Room G'];
const times = ['16:00', '17:00', '18:00', '19:00', '20:00', '21:00'];

function CanvasLabel({ className, children }: { className: string; children: string }) {
  return <span className={`absolute whitespace-nowrap text-[22px] leading-[26px] text-[#808284] ${className}`}>{children}</span>;
}

function Canvas() {
  return (
    <main className="relative w-[1672px] shrink-0 overflow-hidden border-r-2 border-black bg-[#131517]">
      <Links items={behindLinks} />

      <CanvasLabel className="left-[214px] top-[19px]">時段優先1</CanvasLabel>
      <CanvasLabel className="left-[427.500px] top-[19px]">時段優先2</CanvasLabel>
      <CanvasLabel className="left-[665.500px] top-[19px]">選擇琴房編號2</CanvasLabel>
      <CanvasLabel className="left-[935px] top-[19px]">預約成功2</CanvasLabel>
      <CanvasLabel className="left-[1161px] top-[19px]">預約失敗</CanvasLabel>
      <CanvasLabel className="left-[665.500px] top-[493px]">選擇琴房編號1</CanvasLabel>
      <CanvasLabel className="left-[214px] top-[989px]">琴房優先1</CanvasLabel>
      <CanvasLabel className="left-[427.500px] top-[989px]">琴房優先2</CanvasLabel>
      <CanvasLabel className="left-[665.500px] top-[989px]">選擇練習時段2</CanvasLabel>
      <CanvasLabel className="left-[935px] top-[989px]">預約成功1</CanvasLabel>

      <Phone className="left-[206px] top-[51px]" back="主選單" title="時段優先" footer="下一步" tab="circle">
        <PickerBody active={0} rows={['8:00  剩餘25間', '9:00  剩餘20間', '10:00  剩餘08間', '11:00    剩餘10間', '12:00  剩餘20間', '13:00  剩餘13間', '14:00  剩餘07間']} />
      </Phone>
      <Phone className="left-[420.500px] top-[51px]" back="主選單" title="時段優先" footer="下一步" tab="circle">
        <PickerBody active={1} rows={['8:00  剩餘25間', '9:00  剩餘15間', '10:00  剩餘02間', '11:00    剩餘03間', '12:00  剩餘08間', '13:00  剩餘08間', '14:00  剩餘07間']} />
      </Phone>
      <Phone className="left-[658px] top-[51px]" back="時段優先" title="選擇琴房" footer="下一步" tab="circle">
        <RadioBody intro={['您選擇的時段為', '11:00 / 直立', '剩餘的琴房如下：']} items={roomsA} selected={3} pad="pl-[54px]" />
      </Phone>
      <Phone className="left-[928px] top-[51px]" title="預約完成" gear footer="回主選單">
        <SuccessBody room="直立 Room 13" time="11:00" />
      </Phone>
      <Phone className="left-[1155px] top-[51px]" title="預約失敗" gear footer="回主選單重新預約">
        <FailBody />
      </Phone>

      <Phone className="left-[658px] top-[525px]" back="時段優先" title="選擇琴房" footer="下一步" tab="circle">
        <RadioBody intro={['您選擇的時段為', '11:00 / 平台', '剩餘的琴房如下：']} items={roomsB} selected={3} pad="pl-[54px]" />
      </Phone>

      <Phone className="left-[206px] top-[1022px]" back="主選單" title="琴房優先" footer="下一步" tab="square">
        <PickerBody active={1} rows={['平台 Room A', '平台 Room B', '平台 Room C', '平台 Room D', '平台 Room E', '平台 Room F', '平台 Room G']} />
      </Phone>
      <Phone className="left-[420.500px] top-[1022px]" back="主選單" title="琴房優先" footer="下一步" tab="square">
        <PickerBody active={0} rows={['直立 Room 03', '直立 Room 04', '直立 Room 05', '直立 Room 06', '直立 Room 07', '直立 Room 08', '直立 Room 09']} />
      </Phone>
      <Phone className="left-[658px] top-[1022px]" back="琴房優先" title="選擇時段" footer="下一步" tab="square">
        <RadioBody intro={['您選擇的琴房為', '平台 Room D', '剩餘的時段如下：']} items={times} selected={3} pad="pl-[73px]" />
      </Phone>
      <Phone className="left-[928px] top-[1022px]" title="預約完成" gear footer="回主選單">
        <SuccessBody room="平台 Room D" time="19:00" />
      </Phone>

      <Links items={overLinks} />
      <svg className="absolute inset-0 h-[1434px] w-[1672px]" viewBox="328 166 1672 1434">
        {arrows.map((a) => (
          <polygon key={a} points={a} fill="#f59a00" />
        ))}
        {hotspots.map(([x, y], i) => (
          <circle key={i} cx={x} cy={y} r="5.500" fill="#fff" stroke="#f59a00" strokeWidth="2.500" />
        ))}
      </svg>
    </main>
  );
}

/* ---------- right side ---------- */

const railIcons: ReactNode[] = [
  <svg width="40" height="36" viewBox="0 0 40 36" fill="none" stroke="#7a7b7d" strokeWidth="2.500">
    <path d="M1 20v14h38V20M20 26V3M11 11l9-9 9 9" />
  </svg>,
  <svg width="24" height="28" viewBox="0 0 24 28"><path d="M1 1l22 13L1 27z" fill="#7a7b7d" /></svg>,
  <svg width="26" height="32" viewBox="0 0 26 32"><path d="M17 0 0 19h11L7 32l19-19H14z" fill="#7a7b7d" /></svg>,
  <svg width="38" height="42" viewBox="0 0 38 42" fillRule="evenodd"><path d="M19 0l19 10v22L19 42 0 32V10zM19 15c-4 0-7 3-7 6s3 6 7 6 7-3 7-6-3-6-7-6z" fill="#7a7b7d" /></svg>,
  <svg width="40" height="40" viewBox="0 0 40 40" fill="none">
    <rect x="1" y="1" width="38" height="38" stroke="#7a7b7d" strokeWidth="1.800" strokeDasharray="2.500 2.500" />
    <rect x="6" y="6" width="12" height="12" fill="#7a7b7d" />
    <path d="M22 8h12M22 14h12M6 24h28M6 31h28" stroke="#7a7b7d" strokeWidth="3" />
  </svg>,
  <svg width="40" height="40" viewBox="0 0 40 40" fill="none">
    <rect width="18" height="18" fill="#7a7b7d" />
    <rect x="23" y="1" width="16" height="16" stroke="#7a7b7d" strokeWidth="1.800" strokeDasharray="4 2.500" />
    <rect x="1" y="23" width="16" height="16" stroke="#7a7b7d" strokeWidth="1.800" strokeDasharray="4 2.500" />
  </svg>,
  <svg width="40" height="40" viewBox="0 0 40 40" fill="none" stroke="#7a7b7d" strokeWidth="1.800">
    <path d="M3 5h34v32M3 5v18M20 37h17" />
    <rect x="0" y="1" width="5" height="6" fill="#7a7b7d" />
    <rect x="35" y="1" width="5" height="6" fill="#7a7b7d" />
    <rect x="35" y="33" width="5" height="6" fill="#7a7b7d" />
    <path d="M3 30 22 14l8 6-18 17H3z" strokeWidth="2" />
    <path d="M22 14l5-4 8 6-5 4z" fill="#7a7b7d" />
  </svg>,
  <svg width="40" height="40" viewBox="0 0 40 40" fill="none">
    <path d="M32 18v20H1V7h20" stroke="#7a7b7d" strokeWidth="2" />
    <path d="M32 0v16M24 8h16" stroke="#7a7b7d" strokeWidth="4" />
    <path d="M5 32l5-7 3 4 6-8 8 11z" fill="#7a7b7d" />
  </svg>,
];

function Rail() {
  return (
    <div className="flex w-[82px] shrink-0 flex-col border-r-2 border-black bg-[#2e2f32]">
      <div className="flex h-[52px] shrink-0 items-center justify-center border-b-2 border-[#3a3b3e] bg-[#1c1d1f]">
        <svg width="28" height="28" viewBox="0 0 28 28" fill="#7a7b7d">
          <path d="M16 0C7 0 0 6 0 14s7 14 16 14V20h-4l-2-6 2-6h4z" />
          <path d="M20 0h8v6h-8zM20 22h8v6h-8zM22 11h6v6h-6z" />
        </svg>
      </div>
      {railIcons.map((icon, i) => (
        <div key={i} className="flex h-[80px] shrink-0 items-center justify-center border-b-2 border-[#3a3b3e] pt-[5px]">
          {icon}
        </div>
      ))}
    </div>
  );
}

// alignment buttons: guide lines plus a solid block, like the real inspector
const alignIcons: ({ lines: string; x: number; y: number; w: number; h: number } | null)[] = [
  { lines: 'M2 1v24M24 1v24', x: 7, y: 6, w: 12, h: 14 },
  { lines: 'M0 2h26M0 24h26', x: 5, y: 8, w: 16, h: 10 },
  null,
  { lines: 'M2 1v24', x: 5, y: 8, w: 19, h: 10 },
  { lines: 'M13 1v24', x: 3, y: 8, w: 20, h: 10 },
  { lines: 'M24 1v24', x: 2, y: 8, w: 19, h: 10 },
  { lines: 'M0 2h26', x: 8, y: 3, w: 10, h: 19 },
  { lines: 'M0 13h26', x: 8, y: 3, w: 10, h: 20 },
  { lines: 'M0 24h26', x: 8, y: 4, w: 10, h: 18 },
];

function AlignBar() {
  return (
    <div className="flex h-[52px] items-center border-b-2 border-[#55575a] bg-[#434548] pl-[24px]">
      {alignIcons.map((d, i) =>
        d ? (
          <svg key={i} className={i === 0 ? '' : i === 3 ? 'ml-[24px]' : 'ml-[28px]'} width="26" height="26" viewBox="0 0 26 26" fill="none">
            <path d={d.lines} stroke="#77787a" strokeWidth="1.800" />
            <rect x={d.x} y={d.y} width={d.w} height={d.h} rx="2.500" fill="#77787a" />
          </svg>
        ) : (
          <span key={i} className="ml-[26px] flex w-[4px] flex-col items-center gap-[4px]">
            <i className="h-[4px] w-[4px] rounded-full bg-[#77787a]" />
            <i className="h-[4px] w-[4px] rounded-full bg-[#77787a]" />
            <i className="h-[4px] w-[4px] rounded-full bg-[#77787a]" />
          </span>
        )
      )}
    </div>
  );
}

function Field({ label }: { label: string }) {
  return (
    <div className="flex h-[42px] w-[126px] items-center justify-end rounded-[8px] border-2 border-[#3b3c3f] bg-[#343538] pr-[10px] text-[18px] font-bold text-[#5f6063]">
      {label}
    </div>
  );
}

function StyleRow({ label }: { label: string }) {
  return (
    <div className="flex h-[64px] items-center justify-between border-b-2 border-[#3b3c3f] pr-[26px]">
      <span className="text-[22px] font-semibold text-[#e6e6e6]">{label}</span>
      <svg width="22" height="22" viewBox="0 0 22 22" stroke="#77787a" strokeWidth="1.800"><path d="M11 0v22M0 11h22" /></svg>
    </div>
  );
}

function Inspector() {
  return (
    <aside className="w-[478px] shrink-0 bg-[#2d2e31]">
      <AlignBar />
      <div className="border-b-2 border-[#3b3c3f] px-[20px] pb-[20px] pt-[20px]">
        <div className="flex gap-[30px]">
          <Field label="X" />
          <Field label="Y" />
          <Field label="°" />
        </div>
        <div className="mt-[20px] flex gap-[30px]">
          <Field label="W" />
          <Field label="H" />
          <div className="flex gap-[10px]">
            <div className="flex h-[42px] w-[58px] items-center justify-center rounded-[8px] border-2 border-[#3b3c3f]">
              <svg width="22" height="18" viewBox="0 0 22 18" fill="#77787a"><path d="M10 0v18H0zM12 0v18h10z" /></svg>
            </div>
            <div className="flex h-[42px] w-[58px] items-center justify-center rounded-[8px] border-2 border-[#3b3c3f]">
              <svg width="22" height="18" viewBox="0 0 22 18" fill="#77787a"><path d="M0 0l22 8H0zM0 10h22L0 18z" /></svg>
            </div>
          </div>
        </div>
      </div>
      <div className="pl-[20px]">
        <div className="flex h-[63px] items-center justify-between border-b-2 border-[#3b3c3f] pr-[26px]">
          <span className="text-[20px] font-bold tracking-[0.5px] text-[#8c8d8f]">STYLE</span>
          <svg width="20" height="11" viewBox="0 0 20 11" fill="none" stroke="#a4a5a7" strokeWidth="1.800"><path d="M1 1l9 8 9-8" /></svg>
        </div>
        <StyleRow label="Fills" />
        <StyleRow label="Borders" />
        <StyleRow label="Shadows" />
        <StyleRow label="Inner Shadows" />
        <div className="flex h-[64px] items-center justify-between pr-[26px]">
          <span className="text-[22px] font-semibold text-[#e6e6e6]">Blurs</span>
          <span className="h-[22px] w-[22px] rounded-[5px] border border-[#47484b] bg-[#3b3c3f]" />
        </div>
      </div>
      <div className="border-t-2 border-[#3b3c3f]" />
    </aside>
  );
}

export default function App() {
  return (
    <div className="flex h-[1600px] w-[2560px] flex-col overflow-hidden rounded-b-[10px] bg-[#131517] [font-family:Inter,'Noto_Sans_CJK_TC',sans-serif]">
      <Toolbar />
      <TitleBar />
      <div className="flex min-h-0 flex-1">
        <Sidebar />
        <Canvas />
        <Rail />
        <Inspector />
      </div>
    </div>
  );
}
